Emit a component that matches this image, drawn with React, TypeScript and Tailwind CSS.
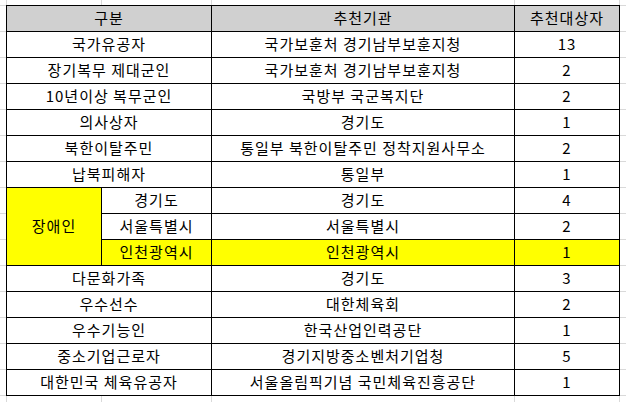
import React from 'react';

type Row = { group: string; org: string; count: string; highlight?: boolean };

const topRows: Row[] = [
  { group: '국가유공자', org: '국가보훈처 경기남부보훈지청', count: '13' },
  { group: '장기복무 제대군인', org: '국가보훈처 경기남부보훈지청', count: '2' },
  { group: '10년이상 복무군인', org: '국방부 국군복지단', count: '2' },
  { group: '의사상자', org: '경기도', count: '1' },
  { group: '북한이탈주민', org: '통일부 북한이탈주민 정착지원사무소', count: '2' },
  { group: '납북피해자', org: '통일부', count: '1' },
];

// 장애인 sub rows
const disabledRows: Row[] = [
  { group: '경기도', org: '경기도', count: '4' },
  { group: '서울특별시', org: '서울특별시', count: '2' },
  { group: '인천광역시', org: '인천광역시', count: '1', highlight: true },
];

const bottomRows: Row[] = [
  { group: '다문화가족', org: '경기도', count: '3' },
  { group: '우수선수', org: '대한체육회', count: '2' },
  { group: '우수기능인', org: '한국산업인력공단', count: '1' },
  { group: '중소기업근로자', org: '경기지방중소벤처기업청', count: '5' },
  { group: '대한민국 체육유공자', org: '서울올림픽기념 국민체육진흥공단', count: '1' },
];

const cell = 'h-[26px] flex items-center justify-center border-r border-b border-black';

const GridStrip = () => (
  <div className="flex flex-col w-[6px] border-t border-[#d9d9d9]">
    {Array.from({ length: 15 }).map((_, i) => (
      <div key={i} className="h-[26px] border-b border-[#d9d9d9]" />
    ))}
  </div>
);

const ColTicks = ({ height }: { height: string }) => (
  <div className={`flex ${height}`}>
    <div className="w-[7px] border-r border-[#d9d9d9]" />
    <div className="w-[95px] border-r border-[#d9d9d9]" />
    <div className="w-[110px] border-r border-[#d9d9d9]" />
    <div className="w-[303px] border-r border-[#d9d9d9]" />
    <div className="w-[105px] border-r border-[#d9d9d9]" />
    <div className="flex-1" />
  </div>
);

export default function App() {
  return (
    <div
      className="w-[626px] h-[402px] bg-white overflow-hidden flex flex-col text-black text-[15px] tracking-[1px]"
      style={{ fontFamily: '"Noto Sans CJK KR", "Noto Sans", sans-serif' }}
    >
      <ColTicks height="h-[5px]" />
      <div className="flex">
        <GridStrip />
        <div className="grid grid-cols-[95px_110px_303px_105px] border-l border-t border-black">
          {/* header */}
          <div className={`${cell} col-span-2 bg-[#d0d0d0]`}>구분</div>
          <div className={`${cell} bg-[#d0d0d0]`}>추천기관</div>
          <div className={`${cell} bg-[#d0d0d0]`}>추천대상자</div>

          {topRows.map((r) => (
            <React.Fragment key={r.group}>
              <div className={`${cell} col-span-2`}>{r.group}</div>
              <div className={cell}>{r.org}</div>
              <div className={cell}>{r.count}</div>
            </React.Fragment>
          ))}

          <div className="row-span-3 flex items-center justify-center border-r border-b border-black bg-[#ffff00]">
            장애인
          </div>
          {disabledRows.map((r) => (
            <React.Fragment key={r.group}>
              <div className={`${cell} ${r.highlight ? 'bg-[#ffff00]' : ''}`}>{r.group}</div>
              <div className={`${cell} ${r.highlight ? 'bg-[#ffff00]' : ''}`}>{r.org}</div>
              <div className={`${cell} ${r.highlight ? 'bg-[#ffff00]' : ''}`}>{r.count}</div>
            </React.Fragment>
          ))}

          {bottomRows.map((r) => (
            <React.Fragment key={r.group}>
              <div className={`${cell} col-span-2`}>{r.group}</div>
              <div className={cell}>{r.org}</div>
              <div className={cell}>{r.count}</div>
            </React.Fragment>
          ))}
        </div>
        <GridStrip />
      </div>
      <ColTicks height="flex-1" />
    </div>
  );
}
